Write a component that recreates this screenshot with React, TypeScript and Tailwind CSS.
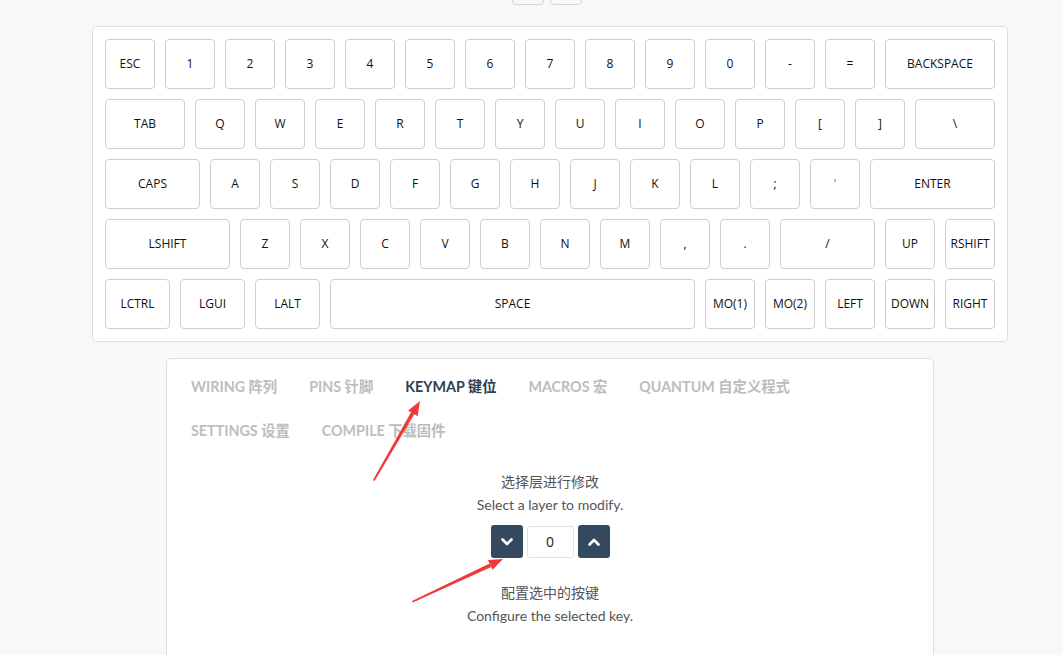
import React from "react";

type K = { l: string; w: number; c?: string };

const rows: K[][] = [
  [
    { l: "ESC", w: 50 }, { l: "1", w: 50 }, { l: "2", w: 50 }, { l: "3", w: 50 }, { l: "4", w: 50 },
    { l: "5", w: 50 }, { l: "6", w: 50 }, { l: "7", w: 50 }, { l: "8", w: 50 }, { l: "9", w: 50 },
    { l: "0", w: 50 }, { l: "-", w: 50 }, { l: "=", w: 50 }, { l: "BACKSPACE", w: 110 },
  ],
  [
    { l: "TAB", w: 80 }, { l: "Q", w: 50 }, { l: "W", w: 50 }, { l: "E", w: 50 }, { l: "R", w: 50 },
    { l: "T", w: 50 }, { l: "Y", w: 50 }, { l: "U", w: 50 }, { l: "I", w: 50 }, { l: "O", w: 50 },
    { l: "P", w: 50 }, { l: "[", w: 50 }, { l: "]", w: 50 }, { l: "\\", w: 80 },
  ],
  [
    { l: "CAPS", w: 95 }, { l: "A", w: 50 }, { l: "S", w: 50 }, { l: "D", w: 50 }, { l: "F", w: 50 },
    { l: "G", w: 50 }, { l: "H", w: 50 }, { l: "J", w: 50 }, { l: "K", w: 50 }, { l: "L", w: 50 },
    { l: ";", w: 50 }, { l: "'", w: 50, c: "#c2410c" }, { l: "ENTER", w: 125 },
  ],
  [
    { l: "LSHIFT", w: 125 }, { l: "Z", w: 50 }, { l: "X", w: 50 }, { l: "C", w: 50 }, { l: "V", w: 50 },
    { l: "B", w: 50 }, { l: "N", w: 50 }, { l: "M", w: 50 }, { l: ",", w: 50 }, { l: ".", w: 50 },
    { l: "/", w: 95 }, { l: "UP", w: 50 }, { l: "RSHIFT", w: 50 },
  ],
  [
    { l: "LCTRL", w: 65 }, { l: "LGUI", w: 65 }, { l: "LALT", w: 65 }, { l: "SPACE", w: 365 },
    { l: "MO(1)", w: 50 }, { l: "MO(2)", w: 50 }, { l: "LEFT", w: 50 }, { l: "DOWN", w: 50 }, { l: "RIGHT", w: 50 },
  ],
];

const tabs1 = [
  { t: "WIRING 阵列", a: false },
  { t: "PINS 针脚", a: false },
  { t: "KEYMAP 键位", a: true },
  { t: "MACROS 宏", a: false },
  { t: "QUANTUM 自定义程式", a: false },
];
const tabs2 = [
  { t: "SETTINGS 设置", a: false },
  { t: "COMPILE 下载固件", a: false },
];

const keyFont = { fontFamily: '"Open Sans", "Noto Sans", sans-serif' };
const latoFont = { fontFamily: 'Lato, "Noto Sans CJK SC", sans-serif' };

function Tab({ t, a }: { t: string; a: boolean }) {
  return (
    <div className={"text-[14.3px] leading-[20px] font-bold whitespace-nowrap " + (a ? "text-[#2c3e50]" : "text-[#bdbdbd]")}>
      {t}
    </div>
  );
}

export default function App() {
  return (
    <div className="relative w-[1063px] h-[655px] overflow-hidden bg-[#f8f8f8]">
      {/* top partial buttons */}
      <div className="flex gap-[6px] ml-[512px] -mt-[10px]">
        <div className="w-[32px] h-[15px] rounded-[4px] border border-[#d5d5d5] bg-[#f8f8f8]" />
        <div className="w-[32px] h-[15px] rounded-[4px] border border-[#d5d5d5] bg-[#f8f8f8]" />
      </div>

      {/* keyboard panel */}
      <div className="mt-[21px] ml-[92px] w-[916px] h-[316px] rounded-[5px] border border-[#dedede] bg-white pt-[12px] pl-[12px] flex flex-col gap-[10px]">
        {rows.map((row, ri) => (
          <div key={ri} className="flex gap-[10px]">
            {row.map((k, ki) => (
              <div
                key={ki}
                className="h-[50px] shrink-0 rounded-[4px] border border-[#cfcfcf] bg-white flex items-center justify-center text-[12px] text-[#111]"
                style={{ width: k.w, ...keyFont, color: k.c }}
              >
                {k.l}
              </div>
            ))}
          </div>
        ))}
      </div>

      {/* lower panel */}
      <div
        className="mt-[16px] ml-[166px] w-[768px] h-[320px] rounded-[5px] border border-[#dedede] bg-white px-[24px] pt-[6px]"
        style={latoFont}
      >
        <div className="flex gap-[32px] h-[44px] items-center">
          {tabs1.map((t) => (
            <Tab key={t.t} {...t} />
          ))}
        </div>
        <div className="flex gap-[32px] h-[44px] items-center">
          {tabs2.map((t) => (
            <Tab key={t.t} {...t} />
          ))}
        </div>
        <div className="flex flex-col items-center text-[14px] text-[#555] leading-[23px] mt-[17px]">
          <div>选择层进行修改</div>
          <div>Select a layer to modify.</div>
          <div className="flex gap-[4px] mt-[9px] items-center">
            <div className="w-[32px] h-[33px] rounded-[3px] bg-[#34495e] flex items-center justify-center">
              <svg width="12" height="8" viewBox="0 0 12 8">
                <path d="M1.5 1.5 L6 6 L10.5 1.5" stroke="white" strokeWidth="2.6" fill="none" strokeLinecap="round" strokeLinejoin="round" />
              </svg>
            </div>
            <div className="w-[47px] h-[32px] rounded-[3px] border border-[#e0e0e0] bg-white flex items-center justify-center text-[14px] text-[#222]" style={keyFont}>
              0
            </div>
            <div className="w-[32px] h-[33px] rounded-[3px] bg-[#34495e] flex items-center justify-center">
              <svg width="12" height="8" viewBox="0 0 12 8">
                <path d="M1.5 6.5 L6 2 L10.5 6.5" stroke="white" strokeWidth="2.6" fill="none" strokeLinecap="round" strokeLinejoin="round" />
              </svg>
            </div>
          </div>
          <div className="mt-[23px]">配置选中的按键</div>
          <div>Configure the selected key.</div>
        </div>
      </div>

      {/* red annotation arrows */}
      <svg className="absolute left-0 top-0 pointer-events-none" width="1063" height="655">
        <polygon points="373,480 374.6,480.9 414.4,413.9 411.2,412.1" fill="#f03a3a" />
        <polygon points="420,401 417.6,416.2 408.2,410.6" fill="#f03a3a" />
        <polygon points="412,601 412.8,602.6 491.2,567.0 489.6,563.4" fill="#f03a3a" />
        <polygon points="503,559 492.6,569.8 488.0,560.0" fill="#f03a3a" />
      </svg>
    </div>
  );
}
